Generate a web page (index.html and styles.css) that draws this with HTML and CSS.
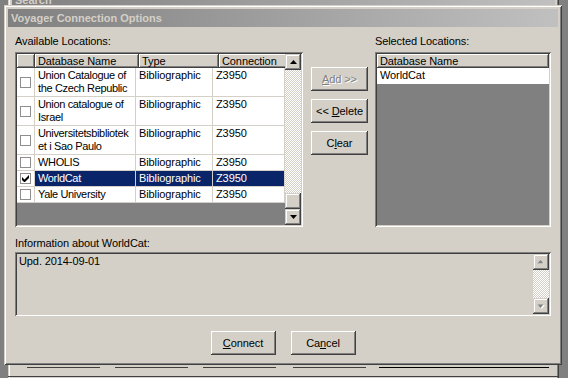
FILE: index.html
```html
<!DOCTYPE html>
<html lang="en">
<head>
  <meta charset="UTF-8">
  <title>Voyager Connection Options</title>
  <link rel="stylesheet" href="styles.css">
</head>
<body>
  <!-- Parent window behind the dialog -->
  <div class="backwin">
    <div class="caption caption-back">Search</div>
    <div class="back-body">
      <div class="back-btns">
        <span class="bb bb1"></span>
        <span class="bb bb2"></span>
        <span class="bb bb3"></span>
        <span class="bb bb4"></span>
        <span class="bb bb5"></span>
      </div>
      <div class="back-rule"></div>
    </div>
  </div>

  <!-- Dialog -->
  <div class="dialog">
    <div class="caption">Voyager Connection Options</div>
    <div class="client">
      <div class="top-row">
        <div class="col-avail">
          <div class="label">Available Locations:</div>
          <div class="listview">
            <div class="lv-main">
              <div class="lv-header">
                <div class="hd c-check"></div>
                <div class="hd c-name">Database Name</div>
                <div class="hd c-type">Type</div>
                <div class="hd c-conn">Connection</div>
              </div>
              <div class="lv-row tall">
                <div class="cell c-check"><span class="checkbox"></span></div>
                <div class="cell c-name">Union Catalogue of<br>the Czech Republic</div>
                <div class="cell c-type">Bibliographic</div>
                <div class="cell c-conn">Z3950</div>
              </div>
              <div class="lv-row tall">
                <div class="cell c-check"><span class="checkbox"></span></div>
                <div class="cell c-name">Union catalogue of<br>Israel</div>
                <div class="cell c-type">Bibliographic</div>
                <div class="cell c-conn">Z3950</div>
              </div>
              <div class="lv-row tall">
                <div class="cell c-check"><span class="checkbox"></span></div>
                <div class="cell c-name">Universitetsbibliotek<br>et i Sao Paulo</div>
                <div class="cell c-type">Bibliographic</div>
                <div class="cell c-conn">Z3950</div>
              </div>
              <div class="lv-row">
                <div class="cell c-check"><span class="checkbox"></span></div>
                <div class="cell c-name">WHOLIS</div>
                <div class="cell c-type">Bibliographic</div>
                <div class="cell c-conn">Z3950</div>
              </div>
              <div class="lv-row selected">
                <div class="cell c-check"><span class="checkbox checked">
                  <svg width="7" height="7" viewBox="0 0 7 7"><path d="M0 2v3l2 2h1l4-4V0L2.5 4.5z" fill="#000"/></svg>
                </span></div>
                <div class="cell c-name">WorldCat</div>
                <div class="cell c-type">Bibliographic</div>
                <div class="cell c-conn">Z3950</div>
              </div>
              <div class="lv-row">
                <div class="cell c-check"><span class="checkbox"></span></div>
                <div class="cell c-name">Yale University</div>
                <div class="cell c-type">Bibliographic</div>
                <div class="cell c-conn">Z3950</div>
              </div>
            </div>
            <div class="vscroll">
              <div class="sbtn"><svg width="7" height="4" viewBox="0 0 7 4"><path d="M3.5 0L7 4H0z" fill="#000"/></svg></div>
              <div class="track"></div>
              <div class="sbtn thumb"></div>
              <div class="sbtn"><svg width="7" height="4" viewBox="0 0 7 4"><path d="M0 0h7L3.5 4z" fill="#000"/></svg></div>
            </div>
          </div>
        </div>

        <div class="col-btns">
          <button class="btn disabled"><u>A</u>dd &gt;&gt;</button>
          <button class="btn">&lt;&lt; <u>D</u>elete</button>
          <button class="btn">C<u>l</u>ear</button>
        </div>

        <div class="col-sel">
          <div class="label">Selected Locations:</div>
          <div class="listbox">
            <div class="lb-header">Database Name</div>
            <div class="lb-row">WorldCat</div>
          </div>
        </div>
      </div>

      <div class="label info-label">Information about WorldCat:</div>
      <div class="infobox">
        <div class="info-text">Upd. 2014-09-01</div>
        <div class="vscroll small">
          <div class="sbtn dis"><svg width="8" height="5" viewBox="0 0 8 5"><path d="M4 1L7 4H1z" fill="#fff"/><path d="M3.5 0L6.5 3.5H0.5z" fill="#808080"/></svg></div>
          <div class="track"></div>
          <div class="sbtn dis"><svg width="8" height="5" viewBox="0 0 8 5"><path d="M1 1h7L4.5 5z" fill="#fff"/><path d="M0.5 0.5h6L3.5 4z" fill="#808080"/></svg></div>
        </div>
      </div>

      <div class="bottom-btns">
        <button class="btn wide"><u>C</u>onnect</button>
        <button class="btn wide">Ca<u>n</u>cel</button>
      </div>
    </div>
  </div>
</body>
</html>
```

FILE: styles.css
```css
/* Base */
body {
  margin: 0;
  width: 568px;
  height: 378px;
  overflow: hidden;
  position: relative;
  background: #808080;
  font-family: 'Liberation Sans', Arial, sans-serif;
  font-size: 11px;
  letter-spacing: -0.1px;
  color: #000;
}

u {
  text-decoration: underline;
  text-underline-offset: 1px;
}

/* Window captions (inactive gradient) */
.caption {
  height: 18px;
  line-height: 18px;
  padding-left: 3px;
  background: linear-gradient(to right, #808080, #c0c0c0);
  color: #d4d0c8;
  font-weight: bold;
  font-size: 11px;
  letter-spacing: 0;
  white-space: nowrap;
}

/* Parent window */
.backwin {
  position: absolute;
  left: 8px;
  top: -13px;
  width: 547px;
  height: 400px;
  padding: 2px;
  background: #d4d0c8;
  box-shadow: inset 1px 1px #d4d0c8, inset -1px -1px #404040, inset 2px 2px #fff, inset -2px -2px #808080;
}

.caption-back {
  margin: 2px 2px 0;
}

.back-body {
  height: 360px;
  position: relative;
}

.back-btns .bb {
  position: absolute;
  top: 358px;
  height: 1px;
  background: #404040;
}

.bb1 { left: 17px; width: 73px; }
.bb2 { left: 105px; width: 73px; }
.bb3 { left: 193px; width: 73px; }
.bb4 { left: 283px; width: 73px; }
.bb5 { left: 369px; width: 170px; background: #000 !important; }

.back-rule {
  position: absolute;
  top: 367px;
  left: -2px;
  right: -2px;
  height: 1px;
  background: #404040;
}

/* Dialog window */
.dialog {
  position: absolute;
  left: 4px;
  top: 5px;
  width: 550px;
  height: 352px;
  padding: 4px;
  background: #d4d0c8;
  box-shadow: inset 1px 1px #d4d0c8, inset -1px -1px #404040, inset 2px 2px #fff, inset -2px -2px #808080;
}

.client {
  padding: 8px 7px 0;
}

.label {
  height: 13px;
  line-height: 13px;
  white-space: nowrap;
}

.top-row {
  display: flex;
  gap: 8px;
}

.col-avail {
  width: 288px;
  display: flex;
  flex-direction: column;
  gap: 4px;
}

.col-btns {
  display: flex;
  flex-direction: column;
  gap: 8px;
  padding-top: 32px;
}

.col-sel {
  width: 176px;
  margin-left: -1px;
  display: flex;
  flex-direction: column;
  gap: 4px;
}

/* Sunken control frame */
.listview,
.listbox,
.infobox {
  padding: 2px;
  box-shadow: inset 1px 1px #808080, inset -1px -1px #fff, inset 2px 2px #404040, inset -2px -2px #d4d0c8;
}

.listview {
  height: 171px;
  display: flex;
}

.lv-main {
  flex: 1;
  background: #808080;
  overflow: hidden;
}

.lv-header,
.lv-row {
  display: flex;
}

.hd {
  height: 14px;
  line-height: 14px;
  padding: 0 0 0 3px;
  background: #d4d0c8;
  box-shadow: inset -1px -1px #404040, inset 1px 1px #fff, inset -2px -2px #808080;
  white-space: nowrap;
}

.c-check { width: 18px; flex: none; }
.c-name { width: 101px; flex: none; }
.c-type { width: 77px; flex: none; }
.c-conn { width: 72px; flex: none; }

.hd.c-check { padding: 0; }

.lv-row {
  height: 16px;
  background: #fff;
}

.lv-row.tall {
  height: 29px;
}

.cell {
  box-sizing: border-box;
  padding: 1px 0 0 3px;
  line-height: 13px;
  border-right: 1px solid #d4d0c8;
  border-bottom: 1px solid #d4d0c8;
  white-space: nowrap;
  overflow: hidden;
}

.cell.c-name {
  letter-spacing: -0.35px;
}

.cell.c-check {
  padding: 0;
  display: flex;
  align-items: center;
  justify-content: center;
}

.checkbox {
  width: 11px;
  height: 11px;
  box-sizing: border-box;
  border: 1px solid #8e8e8e;
  background: #fff;
  display: flex;
  align-items: center;
  justify-content: center;
}

.lv-row.selected .cell:not(.c-check) {
  background: #0a246a;
  color: #fff;
}

/* Scrollbars */
.vscroll {
  width: 16px;
  display: flex;
  flex-direction: column;
}

.sbtn {
  height: 16px;
  flex: none;
  background: #d4d0c8;
  box-shadow: inset -1px -1px #404040, inset 1px 1px #d4d0c8, inset -2px -2px #808080, inset 2px 2px #fff;
  display: flex;
  align-items: center;
  justify-content: center;
}

.track {
  flex: 1;
  background: repeating-conic-gradient(#fff 0 25%, #d4d0c8 0 50%) 0 0 / 2px 2px;
}

/* Buttons */
.btn {
  width: 57px;
  height: 24px;
  padding: 0;
  border: none;
  background: #d4d0c8;
  box-shadow: inset -1px -1px #404040, inset 1px 1px #fff, inset -2px -2px #808080;
  font-family: 'Liberation Sans', Arial, sans-serif;
  font-size: 11px;
  letter-spacing: -0.1px;
  color: #000;
}

.btn.disabled {
  color: #808080;
  text-shadow: 1px 1px #fff;
}

.btn.wide {
  width: 65px;
}

/* Selected list */
.listbox {
  height: 171px;
  background: #808080;
}

.lb-header {
  height: 14px;
  line-height: 14px;
  padding-left: 3px;
  background: #d4d0c8;
  box-shadow: inset -1px -1px #404040, inset 1px 1px #fff, inset -2px -2px #808080;
}

.lb-row {
  height: 16px;
  line-height: 15px;
  padding-left: 3px;
  background: #fff;
}

/* Information box */
.info-label {
  margin-top: 10px;
  margin-bottom: 2px;
}

.infobox {
  height: 60px;
  width: 532px;
  display: flex;
  justify-content: space-between;
}

.info-text {
  padding: 1px 0 0 2px;
  line-height: 13px;
}

.bottom-btns {
  display: flex;
  justify-content: center;
  gap: 15px;
  margin-top: 15px;
}
```
